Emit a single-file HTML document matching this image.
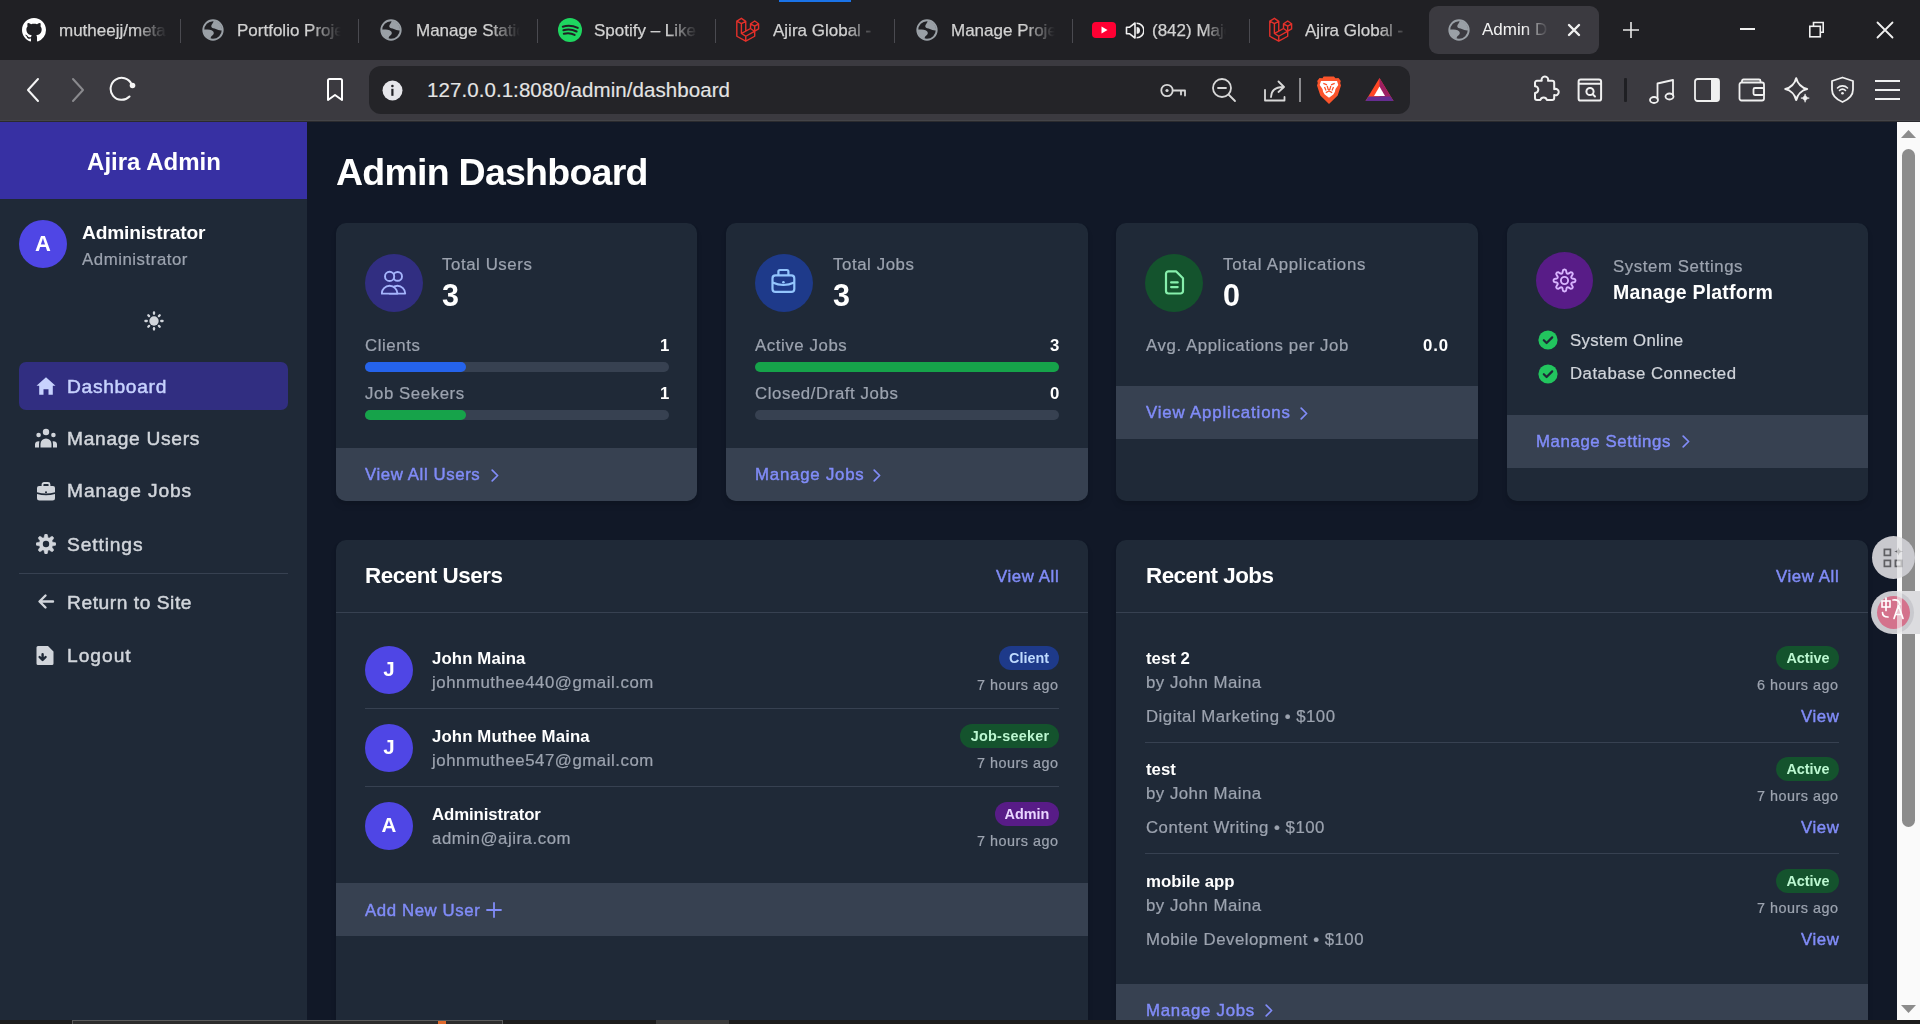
<!DOCTYPE html>
<html><head><meta charset="utf-8"><title>Admin Dashboard</title><style>
*{margin:0;padding:0;box-sizing:border-box}
html,body{width:1920px;height:1024px;overflow:hidden;background:#111827;font-family:"Liberation Sans",sans-serif;position:relative}
.a{position:absolute;display:block}
.t{position:absolute;white-space:nowrap;line-height:1;-webkit-font-smoothing:antialiased;will-change:transform}
</style></head><body>
<div class="a" style="left:0px;top:0px;width:1920px;height:60px;background:#202024;border-radius:0px;"></div>
<div class="a" style="left:779px;top:0px;width:72px;height:2px;background:#1a73e8;border-radius:0px;"></div>
<div class="a" style="left:1429px;top:6px;width:170px;height:48px;background:#3b3a40;border-radius:9px;"></div>
<div class="a" style="left:0px;top:60px;width:1920px;height:61px;background:#3b3a40;border-radius:0px;"></div>
<div class="a" style="left:0px;top:120px;width:1920px;height:1px;background:#444448;border-radius:0px;"></div>
<div class="a" style="left:0px;top:121px;width:1920px;height:1px;background:#2a2a2e;border-radius:0px;"></div>
<div class="a" style="left:369px;top:66px;width:1041px;height:48px;background:#242428;border-radius:12px;"></div>
<div class="a" style="left:180px;top:19px;width:1px;height:24px;background:#4a4a50;border-radius:0px;"></div>
<div class="a" style="left:358px;top:19px;width:1px;height:24px;background:#4a4a50;border-radius:0px;"></div>
<div class="a" style="left:537px;top:19px;width:1px;height:24px;background:#4a4a50;border-radius:0px;"></div>
<div class="a" style="left:715px;top:19px;width:1px;height:24px;background:#4a4a50;border-radius:0px;"></div>
<div class="a" style="left:894px;top:19px;width:1px;height:24px;background:#4a4a50;border-radius:0px;"></div>
<div class="a" style="left:1072px;top:19px;width:1px;height:24px;background:#4a4a50;border-radius:0px;"></div>
<div class="a" style="left:1249px;top:19px;width:1px;height:24px;background:#4a4a50;border-radius:0px;"></div>
<svg class="a" style="left:22px;top:18px;" width="24" height="24" viewBox="0 0 16 16"><path fill="#fff" d="M8 0C3.58 0 0 3.58 0 8c0 3.54 2.29 6.53 5.47 7.59.4.07.55-.17.55-.38 0-.19-.01-.82-.01-1.49-2.01.37-2.53-.49-2.69-.94-.09-.23-.48-.94-.82-1.13-.28-.15-.68-.52-.01-.53.63-.01 1.08.58 1.23.82.72 1.21 1.87.87 2.33.66.07-.52.28-.87.51-1.07-1.78-.2-3.64-.89-3.64-3.95 0-.87.31-1.59.82-2.15-.08-.2-.36-1.02.08-2.12 0 0 .67-.21 2.2.82.64-.18 1.32-.27 2-.27.68 0 1.36.09 2 .27 1.53-1.04 2.2-.82 2.2-.82.44 1.1.16 1.92.08 2.12.51.56.82 1.27.82 2.15 0 3.07-1.87 3.75-3.65 3.95.29.25.54.73.54 1.48 0 1.07-.01 1.93-.01 2.2 0 .21.15.46.55.38A8.013 8.013 0 0016 8c0-4.42-3.58-8-8-8z"/></svg>
<div class="t" style="left:59px;top:21.91px;font-size:17px;color:#d2d2d2;-webkit-text-stroke:0.25px #d2d2d2;width:108px;overflow:hidden;-webkit-mask-image:linear-gradient(90deg,#000 70%,transparent);">mutheejj/meta</div>
<svg class="a" style="left:202px;top:19px;" width="22" height="22" viewBox="0 0 22 22"><circle cx="11" cy="11" r="9.7" stroke="#9aa0a6" stroke-width="1.9" fill="none"/><path d="M11.8 1.8A9.3 9.3 0 0 1 20.2 11.4C18 11.6 15.6 11.2 13.9 10.1 12.3 9 9.8 9.3 9.3 7.7 8.8 6 11.3 4.3 11.8 1.8Z" fill="#9aa0a6"/><path d="M1.8 10.6C5 10.5 9.2 10.6 11 12.2 12.3 13.4 12 15.3 10.3 16.4 8.9 17.3 8.4 18.6 8.7 20.3A9.3 9.3 0 0 1 1.8 10.6Z" fill="#9aa0a6"/></svg>
<div class="t" style="left:237px;top:21.91px;font-size:17px;color:#d2d2d2;-webkit-text-stroke:0.25px #d2d2d2;width:104px;overflow:hidden;-webkit-mask-image:linear-gradient(90deg,#000 70%,transparent);">Portfolio Projects</div>
<svg class="a" style="left:380px;top:19px;" width="22" height="22" viewBox="0 0 22 22"><circle cx="11" cy="11" r="9.7" stroke="#9aa0a6" stroke-width="1.9" fill="none"/><path d="M11.8 1.8A9.3 9.3 0 0 1 20.2 11.4C18 11.6 15.6 11.2 13.9 10.1 12.3 9 9.8 9.3 9.3 7.7 8.8 6 11.3 4.3 11.8 1.8Z" fill="#9aa0a6"/><path d="M1.8 10.6C5 10.5 9.2 10.6 11 12.2 12.3 13.4 12 15.3 10.3 16.4 8.9 17.3 8.4 18.6 8.7 20.3A9.3 9.3 0 0 1 1.8 10.6Z" fill="#9aa0a6"/></svg>
<div class="t" style="left:416px;top:21.91px;font-size:17px;color:#d2d2d2;-webkit-text-stroke:0.25px #d2d2d2;width:104px;overflow:hidden;-webkit-mask-image:linear-gradient(90deg,#000 70%,transparent);">Manage Static</div>
<svg class="a" style="left:558px;top:18px;" width="24" height="24" viewBox="0 0 24 24"><circle cx="12" cy="12" r="12" fill="#1ed760"/><path d="M4.8 8.7C9 7.3 15 7.6 19.8 9.9M5.4 12.3C9.5 11.1 14.5 11.5 18.6 13.5M5.8 15.8C9.5 14.9 13.5 15.2 16.6 16.9" stroke="#202024" stroke-width="2" stroke-linecap="round" fill="none"/></svg>
<div class="t" style="left:594px;top:21.91px;font-size:17px;color:#d2d2d2;-webkit-text-stroke:0.25px #d2d2d2;width:104px;overflow:hidden;-webkit-mask-image:linear-gradient(90deg,#000 70%,transparent);">Spotify – Like</div>
<svg class="a" style="left:735px;top:17px;" width="26" height="26" viewBox="0 0 26 26"><path d="M1.8 4.1 6.4 1.3 10.75 4.3 6.4 6.6ZM1.8 4.1V19.25L10.75 24.2 19.7 19.25V14.3M6.4 6.6V16.4L10.75 19.25V24.2M10.75 4.3V14M6.7 16.4 15.5 11.5M10.75 19.25 19.4 14.3M15.5 6.8 19.7 4 23.6 6.8 19.7 9.2ZM15.5 6.8V11.5L19.4 14.3 23.6 11.9V6.8M19.7 9.2V14.3" stroke="#e4302a" stroke-width="1.4" fill="none" stroke-linejoin="round"/></svg>
<div class="t" style="left:773px;top:21.91px;font-size:17px;color:#d2d2d2;-webkit-text-stroke:0.25px #d2d2d2;width:104px;overflow:hidden;-webkit-mask-image:linear-gradient(90deg,#000 70%,transparent);">Ajira Global - </div>
<svg class="a" style="left:916px;top:19px;" width="22" height="22" viewBox="0 0 22 22"><circle cx="11" cy="11" r="9.7" stroke="#9aa0a6" stroke-width="1.9" fill="none"/><path d="M11.8 1.8A9.3 9.3 0 0 1 20.2 11.4C18 11.6 15.6 11.2 13.9 10.1 12.3 9 9.8 9.3 9.3 7.7 8.8 6 11.3 4.3 11.8 1.8Z" fill="#9aa0a6"/><path d="M1.8 10.6C5 10.5 9.2 10.6 11 12.2 12.3 13.4 12 15.3 10.3 16.4 8.9 17.3 8.4 18.6 8.7 20.3A9.3 9.3 0 0 1 1.8 10.6Z" fill="#9aa0a6"/></svg>
<div class="t" style="left:951px;top:21.91px;font-size:17px;color:#d2d2d2;-webkit-text-stroke:0.25px #d2d2d2;width:104px;overflow:hidden;-webkit-mask-image:linear-gradient(90deg,#000 70%,transparent);">Manage Projects</div>
<svg class="a" style="left:1092px;top:22px;" width="24" height="16" viewBox="0 0 24 16"><rect width="24" height="16" rx="4" fill="#ff0033"/><path d="M9.5 4.5v7l6-3.5z" fill="#fff"/></svg>
<svg class="a" style="left:1125px;top:21px;" width="19" height="19" viewBox="0 0 19 19"><path d="M1.5 6.2h3.2L10 2v15l-5.3-4.2H1.5z" stroke="#f0f0f0" stroke-width="1.6" fill="none" stroke-linejoin="round"/><path d="M11.6 6A3.4 3.4 0 0 1 11.6 12.8Z" fill="#f0f0f0"/><path d="M11.6 2.2A7.3 7.3 0 0 1 11.6 16.8" stroke="#f0f0f0" stroke-width="1.6" fill="none"/></svg>
<div class="t" style="left:1152px;top:21.91px;font-size:17px;color:#d2d2d2;-webkit-text-stroke:0.25px #d2d2d2;width:74px;overflow:hidden;-webkit-mask-image:linear-gradient(90deg,#000 70%,transparent);">(842) Major</div>
<svg class="a" style="left:1268.4px;top:17px;" width="26" height="26" viewBox="0 0 26 26"><path d="M1.8 4.1 6.4 1.3 10.75 4.3 6.4 6.6ZM1.8 4.1V19.25L10.75 24.2 19.7 19.25V14.3M6.4 6.6V16.4L10.75 19.25V24.2M10.75 4.3V14M6.7 16.4 15.5 11.5M10.75 19.25 19.4 14.3M15.5 6.8 19.7 4 23.6 6.8 19.7 9.2ZM15.5 6.8V11.5L19.4 14.3 23.6 11.9V6.8M19.7 9.2V14.3" stroke="#e4302a" stroke-width="1.4" fill="none" stroke-linejoin="round"/></svg>
<div class="t" style="left:1305px;top:21.91px;font-size:17px;color:#d2d2d2;-webkit-text-stroke:0.25px #d2d2d2;width:104px;overflow:hidden;-webkit-mask-image:linear-gradient(90deg,#000 70%,transparent);">Ajira Global - </div>
<svg class="a" style="left:1448px;top:19px;" width="22" height="22" viewBox="0 0 22 22"><circle cx="11" cy="11" r="9.7" stroke="#9aa0a6" stroke-width="1.9" fill="none"/><path d="M11.8 1.8A9.3 9.3 0 0 1 20.2 11.4C18 11.6 15.6 11.2 13.9 10.1 12.3 9 9.8 9.3 9.3 7.7 8.8 6 11.3 4.3 11.8 1.8Z" fill="#9aa0a6"/><path d="M1.8 10.6C5 10.5 9.2 10.6 11 12.2 12.3 13.4 12 15.3 10.3 16.4 8.9 17.3 8.4 18.6 8.7 20.3A9.3 9.3 0 0 1 1.8 10.6Z" fill="#9aa0a6"/></svg>
<div class="t" style="left:1482px;top:21.21px;font-size:17px;color:#f2f2f2;width:70px;overflow:hidden;-webkit-mask-image:linear-gradient(90deg,#000 60%,transparent 95%);">Admin Dashboard</div>
<svg class="a" style="left:1567px;top:23px;" width="14" height="14" viewBox="0 0 14 14"><path d="M2 2 12 12M12 2 2 12" stroke="#f0f0f0" stroke-width="2.4" stroke-linecap="round"/></svg>
<svg class="a" style="left:1621px;top:20px;" width="20" height="20" viewBox="0 0 20 20"><path d="M10 2v16M2 10h16" stroke="#e8e8e8" stroke-width="1.6"/></svg>
<div class="a" style="left:1740px;top:28px;width:15px;height:2px;background:#f0f0f0;border-radius:0px;"></div>
<svg class="a" style="left:1806px;top:19px;" width="20" height="20" viewBox="0 0 20 20"><rect x="3.8" y="7.3" width="10.5" height="10.5" stroke="#f0f0f0" stroke-width="1.6" fill="none"/><path d="M7.5 7.3V3.5H17.2V13.2H14.3" stroke="#f0f0f0" stroke-width="1.6" fill="none"/></svg>
<svg class="a" style="left:1875px;top:20px;" width="20" height="20" viewBox="0 0 20 20"><path d="M2.5 2.5 17.5 17.5M17.5 2.5 2.5 17.5" stroke="#f0f0f0" stroke-width="1.8" stroke-linecap="round"/></svg>
<svg class="a" style="left:24px;top:77px;" width="18" height="26" viewBox="0 0 18 26"><path d="M14 2 4 13l10 11" stroke="#f5f5f5" stroke-width="2" fill="none" stroke-linecap="round" stroke-linejoin="round"/></svg>
<svg class="a" style="left:69px;top:77px;" width="18" height="26" viewBox="0 0 18 26"><path d="M4 2l10 11L4 24" stroke="#8a8a8e" stroke-width="2" fill="none" stroke-linecap="round" stroke-linejoin="round"/></svg>
<svg class="a" style="left:108px;top:76px;" width="30" height="28" viewBox="0 0 30 28"><path d="M21.5 20.5A11 11 0 1 1 23.5 8" stroke="#f5f5f5" stroke-width="2" fill="none" stroke-linecap="round"/><circle cx="24.5" cy="9.5" r="2.8" fill="#f5f5f5"/></svg>
<svg class="a" style="left:324px;top:77px;" width="22" height="26" viewBox="0 0 22 26"><path d="M4 3.5a1.5 1.5 0 0 1 1.5-1.5h11a1.5 1.5 0 0 1 1.5 1.5V23l-7-5-7 5z" stroke="#fff" stroke-width="2" fill="none" stroke-linejoin="round"/></svg>
<svg class="a" style="left:382px;top:80px;" width="21" height="21" viewBox="0 0 21 21"><circle cx="10.5" cy="10.5" r="10" fill="#e6e6ea"/><rect x="9.3" y="8.8" width="2.2" height="7" fill="#222226"/><circle cx="10.4" cy="6" r="1.3" fill="#222226"/></svg>
<div class="t" style="left:427px;top:79.94px;font-size:20.5px;color:#e4e4e4;letter-spacing:0.07px;will-change:auto;-webkit-text-stroke:0.15px #e4e4e4">127.0.0.1:8080/admin/dashboard</div>
<svg class="a" style="left:1160px;top:82px;" width="27" height="17" viewBox="0 0 27 17"><circle cx="7" cy="8.5" r="5.7" stroke="#d8d8d8" stroke-width="1.8" fill="none"/><circle cx="7" cy="8.5" r="1.6" fill="#d8d8d8"/><path d="M12.7 8.5h12.3v5M21 8.5v4" stroke="#d8d8d8" stroke-width="1.8" fill="none" stroke-linecap="round" stroke-linejoin="round"/></svg>
<svg class="a" style="left:1211px;top:77px;" width="27" height="27" viewBox="0 0 27 27"><circle cx="11" cy="11" r="9" stroke="#d8d8d8" stroke-width="1.8" fill="none"/><path d="M7 11h8M17.5 17.5 24 24" stroke="#d8d8d8" stroke-width="1.8" stroke-linecap="round"/></svg>
<svg class="a" style="left:1262px;top:77px;" width="27" height="27" viewBox="0 0 27 27"><path d="M3 13v10.5h19.5V20M9 20c0-6 4-10 12-10M16.5 4.5 22 10l-5.5 5" stroke="#d8d8d8" stroke-width="1.8" fill="none" stroke-linecap="round" stroke-linejoin="round"/></svg>
<div class="a" style="left:1299px;top:78px;width:2px;height:24px;background:#8a8a8e;border-radius:0px;"></div>
<svg class="a" style="left:1316px;top:76px;" width="26" height="28" viewBox="0 0 26 28"><path d="M7.6 0.5H17.9L19.5 2.3 22.5 2 24.8 5 24.2 7 25 9.5 21.7 19.4 13 27.9 4.3 19.4 1 9.5 1.8 7 1.2 5 3.5 2 6.5 2.3Z" fill="#fb542b"/><path d="M5 5H21L22.3 9 19.5 13 18.8 16 17.3 18.5 13 21.8 8.7 18.5 7.2 16 6.5 13 3.7 9Z" fill="#fff"/><path d="M7.3 7.4 11 8.9M18.7 7.4 15 8.9M11.2 9.8 12.2 13.6H13.8L14.8 9.8M9.8 16.6 13 15 16.2 16.6M8.5 11 10 14.5M17.5 11 16 14.5" stroke="#fb542b" stroke-width="1.3" fill="none" stroke-linejoin="round"/></svg>
<svg class="a" style="left:1365px;top:77px;" width="29" height="25" viewBox="0 0 29 25"><path d="M14.5 1 28.5 24H.5z" fill="#ff4724"/><path d="M14.5 1 28.5 24H14.5z" fill="#9e1f63"/><path d="M.5 24h28l-3-4.5h-22z" fill="#662d91"/><path d="M14.5 9.5 20 19H9z" fill="#fff"/></svg>
<svg class="a" style="left:1532px;top:75px;" width="30" height="28" viewBox="0 0 30 28"><path d="M3 7.75A2 2 0 0 1 5 5.75H9.75A3.3 3.3 0 1 1 16 5.75H20.2A2 2 0 0 1 22.2 7.75V14.2A3.2 3.2 0 1 1 22.2 20V22.9A2 2 0 0 1 20.2 24.9H14.75A3.2 3.2 0 0 0 8.5 24.9H5A2 2 0 0 1 3 22.9V17.9A3.3 3.3 0 0 0 3 11.25Z" stroke="#f0f0f0" stroke-width="2" fill="none" stroke-linejoin="round"/></svg>
<svg class="a" style="left:1576px;top:76px;" width="28" height="27" viewBox="0 0 28 27"><rect x="2.6" y="3.4" width="22.5" height="21.2" rx="2.2" stroke="#f0f0f0" stroke-width="2" fill="none"/><path d="M2.6 7.75h22.5" stroke="#f0f0f0" stroke-width="2"/><circle cx="14" cy="15.5" r="3.6" stroke="#f0f0f0" stroke-width="2" fill="none"/><path d="M16.6 18.1 19 20.5" stroke="#f0f0f0" stroke-width="2" stroke-linecap="round"/></svg>
<div class="a" style="left:1624px;top:78px;width:3px;height:24px;background:#1f1f23;border-radius:1px;"></div>
<svg class="a" style="left:1648px;top:77px;" width="29" height="28" viewBox="0 0 29 28"><path d="M9.5 22.5V6.5L25 3v16" stroke="#f0f0f0" stroke-width="1.8" fill="none" stroke-linejoin="round"/><ellipse cx="6" cy="23" rx="4" ry="3" stroke="#f0f0f0" stroke-width="1.8" fill="none"/><ellipse cx="21.5" cy="19.5" rx="4" ry="3" stroke="#f0f0f0" stroke-width="1.8" fill="none"/></svg>
<svg class="a" style="left:1694px;top:78px;" width="26" height="24" viewBox="0 0 26 24"><rect x="1" y="1" width="24" height="22" rx="2.5" stroke="#f0f0f0" stroke-width="1.8" fill="none"/><rect x="17" y="1" width="8" height="22" fill="#f0f0f0"/></svg>
<svg class="a" style="left:1738px;top:78px;" width="28" height="24" viewBox="0 0 28 24"><path d="M4 4.5V3a1.5 1.5 0 0 1 1.5-1.5H21A1.5 1.5 0 0 1 22.5 3v1.5" stroke="#f0f0f0" stroke-width="1.8" fill="none"/><rect x="1.5" y="4.5" width="24.5" height="18" rx="2" stroke="#f0f0f0" stroke-width="1.8" fill="none"/><rect x="15.5" y="10" width="10.5" height="7" rx="1.5" stroke="#f0f0f0" stroke-width="1.8" fill="none"/></svg>
<svg class="a" style="left:1783px;top:76px;" width="30" height="30" viewBox="0 0 30 30"><path d="M13.2 2.3C14.5 7.5 19 11.8 24.1 13 19 14.2 14.5 18.5 13.2 24 11.9 18.5 7.4 14.2 2.3 13 7.4 11.8 11.9 7.5 13.2 2.3Z" stroke="#f0f0f0" stroke-width="2.1" fill="none" stroke-linejoin="round"/><path d="M22.1 17.9C22.6 20.3 23.9 21.6 26.3 22.1 23.9 22.6 22.6 23.9 22.1 26.3 21.6 23.9 20.3 22.6 17.9 22.1 20.3 21.6 21.6 20.3 22.1 17.9Z" fill="#f0f0f0" stroke="#f0f0f0" stroke-width="0.6" stroke-linejoin="round"/></svg>
<svg class="a" style="left:1830px;top:76px;" width="25" height="28" viewBox="0 0 25 28"><path d="M12.5 1.5 23 5v8.5c0 6-4.5 10-10.5 12.5C6.5 23.5 2 19.5 2 13.5V5z" stroke="#f0f0f0" stroke-width="1.8" fill="none" stroke-linejoin="round"/><path d="M7.5 12a7 7 0 0 1 10 0M9.5 14.5a4 4 0 0 1 6 0" stroke="#f0f0f0" stroke-width="1.6" fill="none" stroke-linecap="round"/><circle cx="12.5" cy="17.3" r="1.3" fill="#f0f0f0"/></svg>
<div class="a" style="left:1875px;top:80px;width:25px;height:2px;background:#f0f0f0;border-radius:0px;"></div>
<div class="a" style="left:1875px;top:89px;width:25px;height:2px;background:#f0f0f0;border-radius:0px;"></div>
<div class="a" style="left:1875px;top:98px;width:25px;height:2px;background:#f0f0f0;border-radius:0px;"></div>
<div class="a" style="left:0px;top:122px;width:1897px;height:898px;background:#111827;border-radius:0px;"></div>
<div class="a" style="left:0px;top:122px;width:307px;height:898px;background:#1f2937;border-radius:0px;"></div>
<div class="a" style="left:0px;top:122px;width:307px;height:77px;background:#3730a3;border-radius:0px;"></div>
<div class="t" style="left:153.5px;transform:translateX(-50%);top:150.08px;font-size:24px;font-weight:700;color:#fff;letter-spacing:0.00px;">Ajira Admin</div>
<div class="a" style="left:19px;top:220px;width:48px;height:48px;background:#4f46e5;border-radius:24px;"></div>
<div class="t" style="left:43.4px;transform:translateX(-50%);top:232.87px;font-size:22px;font-weight:700;color:#fff;letter-spacing:0.00px;">A</div>
<div class="t" style="left:82.0px;top:223.34px;font-size:19.2px;font-weight:700;color:#fff;letter-spacing:-0.20px;">Administrator</div>
<div class="t" style="left:82.0px;top:251.58px;font-size:16.8px;font-weight:400;color:#9ca3af;letter-spacing:0.55px;;-webkit-text-stroke:0.22px #9ca3af">Administrator</div>
<svg class="a" style="left:144px;top:311px;" width="20" height="20" viewBox="0 0 20 20"><circle cx="10" cy="10" r="4.7" fill="#d1d5db"/><line x1="17.20" y1="10.00" x2="18.60" y2="10.00" stroke="#d1d5db" stroke-width="2.3" stroke-linecap="round"/><line x1="14.88" y1="14.88" x2="15.73" y2="15.73" stroke="#d1d5db" stroke-width="2.3" stroke-linecap="round"/><line x1="10.00" y1="17.20" x2="10.00" y2="18.60" stroke="#d1d5db" stroke-width="2.3" stroke-linecap="round"/><line x1="5.12" y1="14.88" x2="4.27" y2="15.73" stroke="#d1d5db" stroke-width="2.3" stroke-linecap="round"/><line x1="2.80" y1="10.00" x2="1.40" y2="10.00" stroke="#d1d5db" stroke-width="2.3" stroke-linecap="round"/><line x1="5.12" y1="5.12" x2="4.27" y2="4.27" stroke="#d1d5db" stroke-width="2.3" stroke-linecap="round"/><line x1="10.00" y1="2.80" x2="10.00" y2="1.40" stroke="#d1d5db" stroke-width="2.3" stroke-linecap="round"/><line x1="14.88" y1="5.12" x2="15.73" y2="4.27" stroke="#d1d5db" stroke-width="2.3" stroke-linecap="round"/></svg>
<div class="a" style="left:19px;top:362px;width:269px;height:48px;background:#312e81;border-radius:7px;"></div>
<svg class="a" style="left:36px;top:376px;" width="20" height="20" viewBox="0 0 20 20"><path d="M10 1.2 19.5 9.8h-2.7v9H12.5v-5.6h-5v5.6H3.2v-9H.5z" fill="#c7d2fe"/></svg>
<div class="t" style="left:67.0px;top:376.64px;font-size:19.2px;font-weight:400;color:#c7d2fe;letter-spacing:0.68px;-webkit-text-stroke:0.5px #c7d2fe">Dashboard</div>
<svg class="a" style="left:35px;top:428px;" width="22" height="20" viewBox="0 0 22 20"><circle cx="11" cy="4" r="3.2" fill="#d1d5db"/><circle cx="3.6" cy="7" r="2.3" fill="#d1d5db"/><circle cx="18.4" cy="7" r="2.3" fill="#d1d5db"/><path d="M5.5 19.5v-3.5a5.5 5.5 0 0 1 11 0v3.5z" fill="#d1d5db"/><path d="M0 19.5v-3a3.2 3.2 0 0 1 4.5-3 8 8 0 0 0-.5 2.8v3.2zM22 19.5v-3a3.2 3.2 0 0 0-4.5-3 8 8 0 0 1 .5 2.8v3.2z" fill="#d1d5db"/></svg>
<div class="t" style="left:67.0px;top:428.74px;font-size:19.2px;font-weight:400;color:#d1d5db;letter-spacing:0.69px;-webkit-text-stroke:0.5px #d1d5db">Manage Users</div>
<svg class="a" style="left:36px;top:482px;" width="20" height="19" viewBox="0 0 20 19"><path d="M6.5 4V2.5A1.5 1.5 0 0 1 8 1h4a1.5 1.5 0 0 1 1.5 1.5V4" stroke="#d1d5db" stroke-width="1.8" fill="none"/><path d="M1 6a2 2 0 0 1 2-2h14a2 2 0 0 1 2 2v4.2c-5.8 1.8-12.2 1.8-18 0z" fill="#d1d5db"/><path d="M1 12c5.8 1.8 12.2 1.8 18 0v4a2.5 2.5 0 0 1-2.5 2.5h-13A2.5 2.5 0 0 1 1 16z" fill="#d1d5db"/><circle cx="10" cy="10.3" r="1" fill="#1f2937"/></svg>
<div class="t" style="left:67.0px;top:481.44px;font-size:19.2px;font-weight:400;color:#d1d5db;letter-spacing:0.90px;-webkit-text-stroke:0.5px #d1d5db">Manage Jobs</div>
<svg class="a" style="left:35.7px;top:534px;" width="20" height="20" viewBox="0 0 20 20"><path d="M10.00 0.00 L10.65 0.08 L11.25 0.50 L11.62 1.86 L11.82 3.23 L12.14 3.70 L12.53 3.90 L12.94 4.03 L13.51 3.93 L14.61 3.10 L15.84 2.39 L16.56 2.52 L17.07 2.93 L17.48 3.44 L17.61 4.16 L16.90 5.39 L16.07 6.49 L15.97 7.06 L16.10 7.47 L16.30 7.86 L16.77 8.18 L18.14 8.38 L19.50 8.75 L19.92 9.35 L20.00 10.00 L19.92 10.65 L19.50 11.25 L18.14 11.62 L16.77 11.82 L16.30 12.14 L16.10 12.53 L15.97 12.94 L16.07 13.51 L16.90 14.61 L17.61 15.84 L17.48 16.56 L17.07 17.07 L16.56 17.48 L15.84 17.61 L14.61 16.90 L13.51 16.07 L12.94 15.97 L12.53 16.10 L12.14 16.30 L11.82 16.77 L11.62 18.14 L11.25 19.50 L10.65 19.92 L10.00 20.00 L9.35 19.92 L8.75 19.50 L8.38 18.14 L8.18 16.77 L7.86 16.30 L7.47 16.10 L7.06 15.97 L6.49 16.07 L5.39 16.90 L4.16 17.61 L3.44 17.48 L2.93 17.07 L2.52 16.56 L2.39 15.84 L3.10 14.61 L3.93 13.51 L4.03 12.94 L3.90 12.53 L3.70 12.14 L3.23 11.82 L1.86 11.62 L0.50 11.25 L0.08 10.65 L0.00 10.00 L0.08 9.35 L0.50 8.75 L1.86 8.38 L3.23 8.18 L3.70 7.86 L3.90 7.47 L4.03 7.06 L3.93 6.49 L3.10 5.39 L2.39 4.16 L2.52 3.44 L2.93 2.93 L3.44 2.52 L4.16 2.39 L5.39 3.10 L6.49 3.93 L7.06 4.03 L7.47 3.90 L7.86 3.70 L8.18 3.23 L8.38 1.86 L8.75 0.50 L9.35 0.08Z" fill="#d1d5db" stroke="#d1d5db" stroke-width="0.6" stroke-linejoin="round"/><circle cx="10" cy="10" r="3.2" fill="#1f2937"/></svg>
<div class="t" style="left:67.0px;top:534.54px;font-size:19.2px;font-weight:400;color:#d1d5db;letter-spacing:0.88px;-webkit-text-stroke:0.5px #d1d5db">Settings</div>
<div class="a" style="left:19px;top:573px;width:269px;height:1px;background:#374151;border-radius:0px;"></div>
<svg class="a" style="left:37px;top:593px;" width="18" height="17" viewBox="0 0 18 17"><path d="M16 8.5H3M8.5 2.5l-6 6 6 6" stroke="#d1d5db" stroke-width="2.4" fill="none" stroke-linecap="round" stroke-linejoin="round"/></svg>
<div class="t" style="left:67.0px;top:592.64px;font-size:19.2px;font-weight:400;color:#d1d5db;letter-spacing:0.55px;-webkit-text-stroke:0.5px #d1d5db">Return to Site</div>
<svg class="a" style="left:36px;top:646px;" width="18" height="19" viewBox="0 0 18 19"><path d="M0.5 1.5A1.5 1.5 0 0 1 2 0h10l5.5 5.5V17.5A1.5 1.5 0 0 1 16 19H2A1.5 1.5 0 0 1 .5 17.5z" fill="#d1d5db"/><path d="M6.6 8.3v5.2M3.6 11l3 3 3-3" stroke="#1f2937" stroke-width="2.4" fill="none" stroke-linecap="round" stroke-linejoin="round"/></svg>
<div class="t" style="left:67.0px;top:645.84px;font-size:19.2px;font-weight:400;color:#d1d5db;letter-spacing:0.99px;-webkit-text-stroke:0.5px #d1d5db">Logout</div>
<div class="t" style="left:336.0px;top:154.35px;font-size:37.5px;font-weight:700;color:#fff;letter-spacing:-0.75px;">Admin Dashboard</div>
<div class="a" style="left:336px;top:223px;width:361px;height:278px;background:#1f2937;border-radius:10px;box-shadow:0 4.8px 7.2px -1.2px rgba(0,0,0,0.1),0 2.4px 4.8px -2.4px rgba(0,0,0,0.1)"></div>
<div class="a" style="left:336px;top:448px;width:361px;height:53px;background:#374151;border-radius:0px;border-radius:0 0 10px 10px"></div>
<div class="a" style="left:365px;top:254px;width:58px;height:58px;background:#312e81;border-radius:29px;"></div>
<svg class="a" style="left:381px;top:270px;" width="26" height="26" viewBox="0 0 26 26"><circle cx="16.6" cy="6.4" r="4.4" stroke="#a5b4fc" stroke-width="1.9" fill="#312e81"/><circle cx="8.6" cy="6.4" r="4.6" stroke="#a5b4fc" stroke-width="1.9" fill="#312e81"/><path d="M8.6 23.6A7.8 7.8 0 0 1 24.2 23.6Z" stroke="#a5b4fc" stroke-width="1.9" fill="#312e81" stroke-linejoin="round"/><path d="M.8 23.6A7.8 7.8 0 0 1 16.4 23.6Z" stroke="#a5b4fc" stroke-width="1.9" fill="#312e81" stroke-linejoin="round"/></svg>
<div class="t" style="left:442.0px;top:256.98px;font-size:16.8px;font-weight:400;color:#9ca3af;letter-spacing:0.59px;;-webkit-text-stroke:0.22px #9ca3af">Total Users</div>
<div class="t" style="left:442.0px;top:280.28px;font-size:30.5px;font-weight:700;color:#fff;letter-spacing:0.00px;">3</div>
<div class="t" style="left:365.0px;top:337.88px;font-size:16.8px;font-weight:400;color:#9ca3af;letter-spacing:0.59px;;-webkit-text-stroke:0.22px #9ca3af">Clients</div>
<div class="t" style="right:1251.0px;top:337.88px;font-size:16.8px;font-weight:700;color:#fff;letter-spacing:0.00px;">1</div>
<div class="a" style="left:365px;top:362px;width:304px;height:10px;background:#374151;border-radius:5px;"></div>
<div class="a" style="left:365px;top:362px;width:101px;height:10px;background:#2563eb;border-radius:5px;"></div>
<div class="t" style="left:365.0px;top:385.68px;font-size:16.8px;font-weight:400;color:#9ca3af;letter-spacing:0.59px;;-webkit-text-stroke:0.22px #9ca3af">Job Seekers</div>
<div class="t" style="right:1251.0px;top:385.68px;font-size:16.8px;font-weight:700;color:#fff;letter-spacing:0.00px;">1</div>
<div class="a" style="left:365px;top:410px;width:304px;height:10px;background:#374151;border-radius:5px;"></div>
<div class="a" style="left:365px;top:410px;width:101px;height:10px;background:#16a34a;border-radius:5px;"></div>
<div class="t" style="left:365.0px;top:467.48px;font-size:16.8px;font-weight:400;color:#818cf8;letter-spacing:0.60px;-webkit-text-stroke:0.45px #818cf8">View All Users</div>
<svg class="a" style="left:491.0px;top:468.9px;" width="9" height="14" viewBox="0 0 9 14"><path d="M1.2 1.2 6.6 6.5 1.2 11.8" stroke="#818cf8" stroke-width="1.7" fill="none" stroke-linecap="round" stroke-linejoin="round"/></svg>
<div class="a" style="left:726px;top:223px;width:362px;height:278px;background:#1f2937;border-radius:10px;box-shadow:0 4.8px 7.2px -1.2px rgba(0,0,0,0.1),0 2.4px 4.8px -2.4px rgba(0,0,0,0.1)"></div>
<div class="a" style="left:726px;top:448px;width:362px;height:53px;background:#374151;border-radius:0px;border-radius:0 0 10px 10px"></div>
<div class="a" style="left:755px;top:254px;width:58px;height:58px;background:#1e3a8a;border-radius:29px;"></div>
<svg class="a" style="left:770px;top:267px;" width="28" height="28" viewBox="0 0 28 28"><rect x="2.5" y="8.4" width="21.8" height="16.5" rx="3" stroke="#93c5fd" stroke-width="2.2" fill="none"/><path d="M8.4 8.4V4.5A1.5 1.5 0 0 1 9.9 3h7A1.5 1.5 0 0 1 18.4 4.5V8.4" stroke="#93c5fd" stroke-width="2.2" fill="none"/><path d="M2.5 15.5Q13.4 20.5 24.3 15.5" stroke="#93c5fd" stroke-width="2.2" fill="none"/><circle cx="13.4" cy="15.3" r="1.3" fill="#93c5fd"/></svg>
<div class="t" style="left:832.5px;top:257.18px;font-size:16.8px;font-weight:400;color:#9ca3af;letter-spacing:0.59px;;-webkit-text-stroke:0.22px #9ca3af">Total Jobs</div>
<div class="t" style="left:832.5px;top:280.28px;font-size:30.5px;font-weight:700;color:#fff;letter-spacing:0.00px;">3</div>
<div class="t" style="left:755.0px;top:337.88px;font-size:16.8px;font-weight:400;color:#9ca3af;letter-spacing:0.59px;;-webkit-text-stroke:0.22px #9ca3af">Active Jobs</div>
<div class="t" style="right:861.0px;top:337.88px;font-size:16.8px;font-weight:700;color:#fff;letter-spacing:0.00px;">3</div>
<div class="a" style="left:755px;top:362px;width:304px;height:10px;background:#16a34a;border-radius:5px;"></div>
<div class="t" style="left:755.0px;top:385.68px;font-size:16.8px;font-weight:400;color:#9ca3af;letter-spacing:0.59px;;-webkit-text-stroke:0.22px #9ca3af">Closed/Draft Jobs</div>
<div class="t" style="right:861.0px;top:385.68px;font-size:16.8px;font-weight:700;color:#fff;letter-spacing:0.00px;">0</div>
<div class="a" style="left:755px;top:410px;width:304px;height:10px;background:#374151;border-radius:5px;"></div>
<div class="t" style="left:755.0px;top:467.48px;font-size:16.8px;font-weight:400;color:#818cf8;letter-spacing:0.80px;-webkit-text-stroke:0.45px #818cf8">Manage Jobs</div>
<svg class="a" style="left:873.4px;top:468.9px;" width="9" height="14" viewBox="0 0 9 14"><path d="M1.2 1.2 6.6 6.5 1.2 11.8" stroke="#818cf8" stroke-width="1.7" fill="none" stroke-linecap="round" stroke-linejoin="round"/></svg>
<div class="a" style="left:1116px;top:223px;width:362px;height:278px;background:#1f2937;border-radius:10px;box-shadow:0 4.8px 7.2px -1.2px rgba(0,0,0,0.1),0 2.4px 4.8px -2.4px rgba(0,0,0,0.1)"></div>
<div class="a" style="left:1116px;top:386px;width:362px;height:53px;background:#374151;border-radius:0px;"></div>
<div class="a" style="left:1145px;top:254px;width:58px;height:58px;background:#14532d;border-radius:29px;"></div>
<svg class="a" style="left:1162px;top:269px;" width="25" height="27" viewBox="0 0 25 27"><path d="M6.5 2.3h7.5l7 7V22a2.5 2.5 0 0 1-2.5 2.5h-12A2.5 2.5 0 0 1 4 22V4.8a2.5 2.5 0 0 1 2.5-2.5z" stroke="#86efac" stroke-width="2.2" fill="none" stroke-linejoin="round"/><path d="M9.1 13.4h6.6M9.1 18.1h6.6" stroke="#86efac" stroke-width="2.2" stroke-linecap="round"/></svg>
<div class="t" style="left:1222.5px;top:257.18px;font-size:16.8px;font-weight:400;color:#9ca3af;letter-spacing:0.75px;;-webkit-text-stroke:0.22px #9ca3af">Total Applications</div>
<div class="t" style="left:1222.5px;top:280.28px;font-size:30.5px;font-weight:700;color:#fff;letter-spacing:0.00px;">0</div>
<div class="t" style="left:1145.5px;top:338.38px;font-size:16.8px;font-weight:400;color:#9ca3af;letter-spacing:0.59px;;-webkit-text-stroke:0.22px #9ca3af">Avg. Applications per Job</div>
<div class="t" style="right:471.0px;top:338.38px;font-size:16.8px;font-weight:700;color:#fff;letter-spacing:0.90px;">0.0</div>
<div class="t" style="left:1145.5px;top:405.18px;font-size:16.8px;font-weight:400;color:#818cf8;letter-spacing:0.85px;-webkit-text-stroke:0.45px #818cf8">View Applications</div>
<svg class="a" style="left:1300.1px;top:406.8px;" width="9" height="14" viewBox="0 0 9 14"><path d="M1.2 1.2 6.6 6.5 1.2 11.8" stroke="#818cf8" stroke-width="1.7" fill="none" stroke-linecap="round" stroke-linejoin="round"/></svg>
<div class="a" style="left:1507px;top:223px;width:361px;height:278px;background:#1f2937;border-radius:10px;box-shadow:0 4.8px 7.2px -1.2px rgba(0,0,0,0.1),0 2.4px 4.8px -2.4px rgba(0,0,0,0.1)"></div>
<div class="a" style="left:1507px;top:415px;width:361px;height:53px;background:#374151;border-radius:0px;"></div>
<div class="a" style="left:1536px;top:252px;width:57px;height:57px;background:#581c87;border-radius:28.5px;"></div>
<svg class="a" style="left:1550px;top:266px;" width="29" height="29" viewBox="0 0 29 29"><path d="M14.50 3.55 L15.21 3.65 L15.87 4.13 L16.29 5.48 L16.55 6.83 L16.92 7.37 L17.35 7.62 L17.83 7.75 L18.47 7.62 L19.61 6.85 L20.87 6.20 L21.67 6.32 L22.24 6.76 L22.68 7.33 L22.80 8.13 L22.15 9.39 L21.38 10.53 L21.25 11.17 L21.38 11.65 L21.63 12.08 L22.17 12.45 L23.52 12.71 L24.87 13.13 L25.35 13.79 L25.45 14.50 L25.35 15.21 L24.87 15.87 L23.52 16.29 L22.17 16.55 L21.63 16.92 L21.38 17.35 L21.25 17.83 L21.38 18.47 L22.15 19.61 L22.80 20.87 L22.68 21.67 L22.24 22.24 L21.67 22.68 L20.87 22.80 L19.61 22.15 L18.47 21.38 L17.83 21.25 L17.35 21.38 L16.92 21.63 L16.55 22.17 L16.29 23.52 L15.87 24.87 L15.21 25.35 L14.50 25.45 L13.79 25.35 L13.13 24.87 L12.71 23.52 L12.45 22.17 L12.08 21.63 L11.65 21.38 L11.17 21.25 L10.53 21.38 L9.39 22.15 L8.13 22.80 L7.33 22.68 L6.76 22.24 L6.32 21.67 L6.20 20.87 L6.85 19.61 L7.62 18.47 L7.75 17.83 L7.62 17.35 L7.37 16.92 L6.83 16.55 L5.48 16.29 L4.13 15.87 L3.65 15.21 L3.55 14.50 L3.65 13.79 L4.13 13.13 L5.48 12.71 L6.83 12.45 L7.37 12.08 L7.62 11.65 L7.75 11.17 L7.62 10.53 L6.85 9.39 L6.20 8.13 L6.32 7.33 L6.76 6.76 L7.33 6.32 L8.13 6.20 L9.39 6.85 L10.53 7.62 L11.17 7.75 L11.65 7.62 L12.08 7.37 L12.45 6.83 L12.71 5.48 L13.13 4.13 L13.79 3.65Z" stroke="#d8b4fe" stroke-width="1.9" fill="none" stroke-linejoin="round"/><circle cx="14.5" cy="14.5" r="3.6" stroke="#d8b4fe" stroke-width="1.9" fill="none"/></svg>
<div class="t" style="left:1612.5px;top:258.88px;font-size:16.8px;font-weight:400;color:#9ca3af;letter-spacing:0.59px;;-webkit-text-stroke:0.22px #9ca3af">System Settings</div>
<div class="t" style="left:1612.5px;top:282.79px;font-size:19.5px;font-weight:700;color:#fff;letter-spacing:0.20px;">Manage Platform</div>
<svg class="a" style="left:1538px;top:330px;" width="20" height="20" viewBox="0 0 20 20"><circle cx="10" cy="10" r="9.6" fill="#22c55e"/><path d="M5.8 10.2l2.8 2.8 5.6-5.6" stroke="#1f2937" stroke-width="2.2" fill="none" stroke-linecap="round" stroke-linejoin="round"/></svg>
<div class="t" style="left:1569.8px;top:332.58px;font-size:16.8px;font-weight:400;color:#d1d5db;letter-spacing:0.34px;;-webkit-text-stroke:0.22px #d1d5db">System Online</div>
<svg class="a" style="left:1538px;top:364px;" width="20" height="20" viewBox="0 0 20 20"><circle cx="10" cy="10" r="9.6" fill="#22c55e"/><path d="M5.8 10.2l2.8 2.8 5.6-5.6" stroke="#1f2937" stroke-width="2.2" fill="none" stroke-linecap="round" stroke-linejoin="round"/></svg>
<div class="t" style="left:1569.8px;top:366.38px;font-size:16.8px;font-weight:400;color:#d1d5db;letter-spacing:0.49px;;-webkit-text-stroke:0.22px #d1d5db">Database Connected</div>
<div class="t" style="left:1536.0px;top:433.68px;font-size:16.8px;font-weight:400;color:#818cf8;letter-spacing:0.60px;-webkit-text-stroke:0.45px #818cf8">Manage Settings</div>
<svg class="a" style="left:1682.1px;top:435.4px;" width="9" height="14" viewBox="0 0 9 14"><path d="M1.2 1.2 6.6 6.5 1.2 11.8" stroke="#818cf8" stroke-width="1.7" fill="none" stroke-linecap="round" stroke-linejoin="round"/></svg>
<div class="a" style="left:336px;top:540px;width:752px;height:480px;background:#1f2937;border-radius:10px;border-bottom-left-radius:0;border-bottom-right-radius:0;box-shadow:0 4.8px 7.2px -1.2px rgba(0,0,0,0.1),0 2.4px 4.8px -2.4px rgba(0,0,0,0.1)"></div>
<div class="t" style="left:365.0px;top:564.53px;font-size:22.4px;font-weight:700;color:#fff;letter-spacing:-0.47px;">Recent Users</div>
<div class="t" style="right:861.0px;top:568.68px;font-size:16.8px;font-weight:400;color:#818cf8;letter-spacing:0.60px;-webkit-text-stroke:0.45px #818cf8">View All</div>
<div class="a" style="left:336px;top:612px;width:752px;height:1px;background:#374151;border-radius:0px;"></div>
<div class="a" style="left:365px;top:646px;width:48px;height:48px;background:#4f46e5;border-radius:24px;"></div>
<div class="t" style="left:389.0px;transform:translateX(-50%);top:658.74px;font-size:20.5px;font-weight:700;color:#fff;letter-spacing:0.00px;">J</div>
<div class="t" style="left:432.3px;top:650.88px;font-size:16.8px;font-weight:700;color:#fff;letter-spacing:0.12px;">John Maina</div>
<div class="t" style="left:432.3px;top:675.18px;font-size:16.8px;font-weight:400;color:#9ca3af;letter-spacing:0.55px;;-webkit-text-stroke:0.22px #9ca3af">johnmuthee440@gmail.com</div>
<div class="a" style="left:999px;top:646px;width:60px;height:24px;background:#1e3a8a;border-radius:12px;"></div>
<div class="t" style="left:1029.0px;transform:translateX(-50%);top:651.41px;font-size:14.4px;font-weight:700;color:#bfdbfe;letter-spacing:0.00px;">Client</div>
<div class="t" style="right:861.0px;top:678.11px;font-size:14.4px;font-weight:400;color:#9ca3af;letter-spacing:0.50px;;-webkit-text-stroke:0.22px #9ca3af">7 hours ago</div>
<div class="a" style="left:365px;top:708px;width:694px;height:1px;background:#374151;border-radius:0px;"></div>
<div class="a" style="left:365px;top:724px;width:48px;height:48px;background:#4f46e5;border-radius:24px;"></div>
<div class="t" style="left:389.0px;transform:translateX(-50%);top:736.74px;font-size:20.5px;font-weight:700;color:#fff;letter-spacing:0.00px;">J</div>
<div class="t" style="left:432.3px;top:728.88px;font-size:16.8px;font-weight:700;color:#fff;letter-spacing:0.12px;">John Muthee Maina</div>
<div class="t" style="left:432.3px;top:753.18px;font-size:16.8px;font-weight:400;color:#9ca3af;letter-spacing:0.55px;;-webkit-text-stroke:0.22px #9ca3af">johnmuthee547@gmail.com</div>
<div class="a" style="left:960px;top:724px;width:99px;height:24px;background:#14532d;border-radius:12px;"></div>
<div class="t" style="left:1009.5px;transform:translateX(-50%);top:729.41px;font-size:14.4px;font-weight:700;color:#bbf7d0;letter-spacing:0.25px;">Job-seeker</div>
<div class="t" style="right:861.0px;top:756.11px;font-size:14.4px;font-weight:400;color:#9ca3af;letter-spacing:0.50px;;-webkit-text-stroke:0.22px #9ca3af">7 hours ago</div>
<div class="a" style="left:365px;top:786px;width:694px;height:1px;background:#374151;border-radius:0px;"></div>
<div class="a" style="left:365px;top:802px;width:48px;height:48px;background:#4f46e5;border-radius:24px;"></div>
<div class="t" style="left:389.0px;transform:translateX(-50%);top:814.74px;font-size:20.5px;font-weight:700;color:#fff;letter-spacing:0.00px;">A</div>
<div class="t" style="left:432.3px;top:806.88px;font-size:16.8px;font-weight:700;color:#fff;letter-spacing:-0.10px;">Administrator</div>
<div class="t" style="left:432.3px;top:831.18px;font-size:16.8px;font-weight:400;color:#9ca3af;letter-spacing:0.55px;;-webkit-text-stroke:0.22px #9ca3af">admin@ajira.com</div>
<div class="a" style="left:995px;top:802px;width:64px;height:24px;background:#581c87;border-radius:12px;"></div>
<div class="t" style="left:1027.0px;transform:translateX(-50%);top:807.41px;font-size:14.4px;font-weight:700;color:#e9d5ff;letter-spacing:0.00px;">Admin</div>
<div class="t" style="right:861.0px;top:834.11px;font-size:14.4px;font-weight:400;color:#9ca3af;letter-spacing:0.50px;;-webkit-text-stroke:0.22px #9ca3af">7 hours ago</div>
<div class="a" style="left:336px;top:883px;width:752px;height:53px;background:#374151;border-radius:0px;"></div>
<div class="t" style="left:365.0px;top:902.68px;font-size:16.8px;font-weight:400;color:#818cf8;letter-spacing:0.60px;-webkit-text-stroke:0.45px #818cf8">Add New User</div>
<svg class="a" style="left:485px;top:900.5px;" width="18" height="18" viewBox="0 0 18 18"><path d="M9 2v14M2 9h14" stroke="#818cf8" stroke-width="1.8" stroke-linecap="round"/></svg>
<div class="a" style="left:1116px;top:540px;width:752px;height:480px;background:#1f2937;border-radius:10px;border-bottom-left-radius:0;border-bottom-right-radius:0;box-shadow:0 4.8px 7.2px -1.2px rgba(0,0,0,0.1),0 2.4px 4.8px -2.4px rgba(0,0,0,0.1)"></div>
<div class="t" style="left:1146.0px;top:564.53px;font-size:22.4px;font-weight:700;color:#fff;letter-spacing:-0.52px;">Recent Jobs</div>
<div class="t" style="right:81.0px;top:568.68px;font-size:16.8px;font-weight:400;color:#818cf8;letter-spacing:0.60px;-webkit-text-stroke:0.45px #818cf8">View All</div>
<div class="a" style="left:1116px;top:612px;width:752px;height:1px;background:#374151;border-radius:0px;"></div>
<div class="t" style="left:1145.5px;top:650.88px;font-size:16.8px;font-weight:700;color:#fff;letter-spacing:0.00px;">test 2</div>
<div class="t" style="left:1145.5px;top:674.88px;font-size:16.8px;font-weight:400;color:#9ca3af;letter-spacing:0.50px;;-webkit-text-stroke:0.22px #9ca3af">by John Maina</div>
<div class="t" style="left:1145.5px;top:708.88px;font-size:16.8px;font-weight:400;color:#9ca3af;letter-spacing:0.50px;;-webkit-text-stroke:0.22px #9ca3af">Digital Marketing • $100</div>
<div class="a" style="left:1776px;top:646px;width:63px;height:24px;background:#14532d;border-radius:12px;"></div>
<div class="t" style="left:1807.5px;transform:translateX(-50%);top:651.41px;font-size:14.4px;font-weight:700;color:#bbf7d0;letter-spacing:0.00px;">Active</div>
<div class="t" style="right:81.0px;top:678.41px;font-size:14.4px;font-weight:400;color:#9ca3af;letter-spacing:0.50px;;-webkit-text-stroke:0.22px #9ca3af">6 hours ago</div>
<div class="t" style="right:81.0px;top:708.78px;font-size:16.8px;font-weight:400;color:#818cf8;letter-spacing:0.60px;-webkit-text-stroke:0.45px #818cf8">View</div>
<div class="a" style="left:1145px;top:742px;width:694px;height:1px;background:#374151;border-radius:0px;"></div>
<div class="t" style="left:1145.5px;top:761.88px;font-size:16.8px;font-weight:700;color:#fff;letter-spacing:0.00px;">test</div>
<div class="t" style="left:1145.5px;top:785.88px;font-size:16.8px;font-weight:400;color:#9ca3af;letter-spacing:0.50px;;-webkit-text-stroke:0.22px #9ca3af">by John Maina</div>
<div class="t" style="left:1145.5px;top:819.88px;font-size:16.8px;font-weight:400;color:#9ca3af;letter-spacing:0.50px;;-webkit-text-stroke:0.22px #9ca3af">Content Writing • $100</div>
<div class="a" style="left:1776px;top:757px;width:63px;height:24px;background:#14532d;border-radius:12px;"></div>
<div class="t" style="left:1807.5px;transform:translateX(-50%);top:762.41px;font-size:14.4px;font-weight:700;color:#bbf7d0;letter-spacing:0.00px;">Active</div>
<div class="t" style="right:81.0px;top:789.41px;font-size:14.4px;font-weight:400;color:#9ca3af;letter-spacing:0.50px;;-webkit-text-stroke:0.22px #9ca3af">7 hours ago</div>
<div class="t" style="right:81.0px;top:819.78px;font-size:16.8px;font-weight:400;color:#818cf8;letter-spacing:0.60px;-webkit-text-stroke:0.45px #818cf8">View</div>
<div class="a" style="left:1145px;top:853px;width:694px;height:1px;background:#374151;border-radius:0px;"></div>
<div class="t" style="left:1145.5px;top:873.88px;font-size:16.8px;font-weight:700;color:#fff;letter-spacing:0.00px;">mobile app</div>
<div class="t" style="left:1145.5px;top:897.88px;font-size:16.8px;font-weight:400;color:#9ca3af;letter-spacing:0.50px;;-webkit-text-stroke:0.22px #9ca3af">by John Maina</div>
<div class="t" style="left:1145.5px;top:931.88px;font-size:16.8px;font-weight:400;color:#9ca3af;letter-spacing:0.50px;;-webkit-text-stroke:0.22px #9ca3af">Mobile Development • $100</div>
<div class="a" style="left:1776px;top:869px;width:63px;height:24px;background:#14532d;border-radius:12px;"></div>
<div class="t" style="left:1807.5px;transform:translateX(-50%);top:874.41px;font-size:14.4px;font-weight:700;color:#bbf7d0;letter-spacing:0.00px;">Active</div>
<div class="t" style="right:81.0px;top:901.41px;font-size:14.4px;font-weight:400;color:#9ca3af;letter-spacing:0.50px;;-webkit-text-stroke:0.22px #9ca3af">7 hours ago</div>
<div class="t" style="right:81.0px;top:931.78px;font-size:16.8px;font-weight:400;color:#818cf8;letter-spacing:0.60px;-webkit-text-stroke:0.45px #818cf8">View</div>
<div class="a" style="left:1116px;top:984px;width:752px;height:36px;background:#374151;border-radius:0px;"></div>
<div class="t" style="left:1145.5px;top:1002.58px;font-size:16.8px;font-weight:400;color:#818cf8;letter-spacing:0.75px;-webkit-text-stroke:0.45px #818cf8">Manage Jobs</div>
<svg class="a" style="left:1264.8px;top:1004.4px;" width="9" height="14" viewBox="0 0 9 14"><path d="M1.2 1.2 6.6 6.5 1.2 11.8" stroke="#818cf8" stroke-width="1.7" fill="none" stroke-linecap="round" stroke-linejoin="round"/></svg>
<div class="a" style="left:1897px;top:122px;width:23px;height:898px;background:#fafafa;border-radius:0px;"></div>
<svg class="a" style="left:1901px;top:130px;" width="15" height="8" viewBox="0 0 15 8"><path d="M7.5 0 15 8H0z" fill="#8c8c8c"/></svg>
<div class="a" style="left:1902px;top:149px;width:13px;height:678px;background:#8c8c8c;border-radius:6.5px;"></div>
<svg class="a" style="left:1901px;top:1005px;" width="15" height="8" viewBox="0 0 15 8"><path d="M0 0h15L7.5 8z" fill="#8c8c8c"/></svg>
<div class="a" style="left:1893px;top:591px;width:27px;height:43px;background:#dcdcdf;border-radius:0px;"></div>
<div class="a" style="left:1872px;top:536px;width:43px;height:43px;background:#c9c9ce;border-radius:21.5px;"></div>
<svg class="a" style="left:1882px;top:546px;" width="22" height="22" viewBox="0 0 22 22"><rect x="2.4" y="3.4" width="6" height="6" stroke="#5f5f63" stroke-width="1.7" fill="none"/><rect x="2.4" y="14.4" width="6" height="6" stroke="#5f5f63" stroke-width="1.7" fill="none"/><rect x="13.4" y="14.4" width="6" height="6" stroke="#5f5f63" stroke-width="1.7" fill="none"/><path d="M16.5 1.2C17 4 18 5 20.8 5.5 18 6 17 7 16.5 9.8 16 7 15 6 12.2 5.5 15 5 16 4 16.5 1.2Z" fill="#5f5f63"/></svg>
<div class="a" style="left:1871px;top:591px;width:43px;height:43px;background:#c9c9ce;border-radius:21.5px;"></div>
<div class="a" style="left:1877px;top:596px;width:33px;height:33px;background:#d4728c;border-radius:16.5px;"></div>
<svg class="a" style="left:1877px;top:596px;" width="33" height="33" viewBox="0 0 33 33"><rect x="5" y="5" width="8" height="6" stroke="#fff" stroke-width="1.6" fill="none"/><path d="M9 2v12.5M5.5 16.5Q5.5 21 11 21M16 4Q22 3 23 8.5M17 22.5 21.5 9.5 26 22.5M18.5 18.5H24.5" stroke="#fff" stroke-width="1.7" fill="none" stroke-linecap="round" stroke-linejoin="round"/></svg>
<div class="a" style="left:1897px;top:536px;width:5px;height:98px;background:rgba(250,250,250,0.6);border-radius:0px;"></div>
<div class="a" style="left:0px;top:1020px;width:1920px;height:4px;background:#1c1c1c;border-radius:0px;"></div>
<div class="a" style="left:72px;top:1020px;width:431px;height:4px;background:#2c2c2c;border-radius:0px;border:1px solid #5a5a5a;border-bottom:none"></div>
<div class="a" style="left:438px;top:1021px;width:8px;height:3px;background:#e06a2c;border-radius:0px;"></div>
<div class="a" style="left:656px;top:1020px;width:73px;height:4px;background:#3a3a3a;border-radius:0px;"></div>
</body></html>
